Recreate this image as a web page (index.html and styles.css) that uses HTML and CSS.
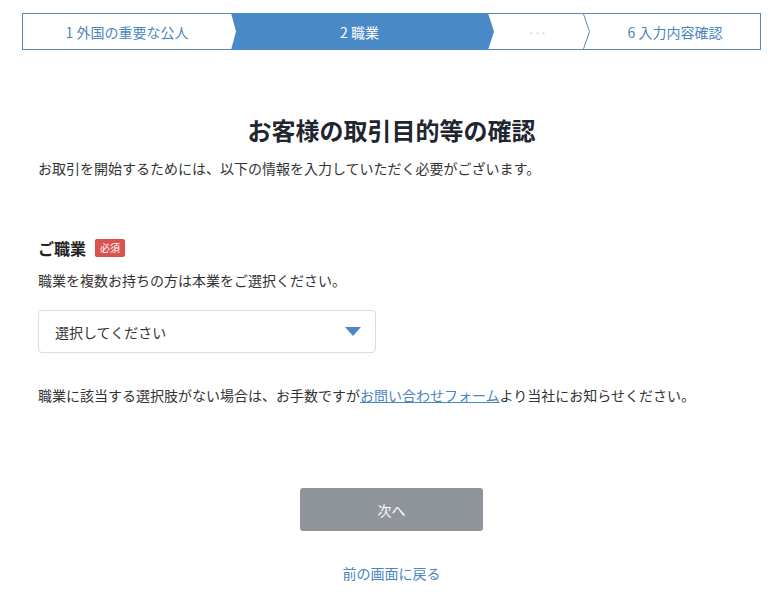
FILE: index.html
```html
<!DOCTYPE html>
<html lang="ja">
<head>
    <meta charset="UTF-8">
    <meta name="viewport" content="width=device-width, initial-scale=1.0">
    <title>お客様の取引目的等の確認</title>
    <link rel="stylesheet" href="styles.css">
</head>
<body>

<div class="page">
    <!-- Progress Steps -->
    <div class="steps">
        <div class="step step-done">1 外国の重要な公人</div>
        <div class="step step-current">2 職業</div>
        <div class="step step-more">···</div>
        <svg class="step-sep" width="7" height="35" viewBox="0 0 7 35">
            <polyline points="0.5,0 6.5,17.5 0.5,35" fill="none" stroke="#5a88b8" stroke-width="1"/>
        </svg>
        <div class="step step-last">6 入力内容確認</div>
    </div>

    <div class="content">
        <h1 class="title">お客様の取引目的等の確認</h1>
        <p class="lead">お取引を開始するためには、以下の情報を入力していただく必要がございます。</p>

        <!-- Occupation -->
        <div class="field">
            <div class="field-label">ご職業 <span class="badge">必須</span></div>
            <p class="field-help">職業を複数お持ちの方は本業をご選択ください。</p>
            <div class="select">
                <span>選択してください</span>
                <svg width="16" height="9" viewBox="0 0 16 9">
                    <polygon points="0,0 16,0 8,9" fill="#4a89c8"/>
                </svg>
            </div>
            <p class="field-note">職業に該当する選択肢がない場合は、お手数ですが<a href="#" class="inline-link">お問い合わせフォーム</a>より当社にお知らせください。</p>
        </div>

        <div class="actions">
            <button type="button" class="btn-next">次へ</button>
            <a href="#" class="back-link">前の画面に戻る</a>
        </div>
    </div>
</div>

</body>
</html>
```

FILE: styles.css
```css
/* General Page Styling */
body {
    margin: 0;
    background: #fff;
    font-family: "Noto Sans CJK JP", "Noto Sans", sans-serif;
    color: #333;
}

.page {
    width: 739px;
    margin: 13px 0 0 22px;
}

/* Progress Steps */
.steps {
    display: flex;
    height: 35px;
    border: 1px solid #5a88b8;
    background: #fff;
}

.step {
    display: flex;
    align-items: center;
    justify-content: center;
    font-size: 14px;
    color: #4a86c0;
}

.step-done {
    width: 208px;
}

.step-current {
    width: 263px;
    margin: -1px 0;
    padding-right: 6px;
    box-sizing: border-box;
    background: #4a89c8;
    color: #fff;
    clip-path: polygon(0 0, calc(100% - 6px) 0, 100% 50%, calc(100% - 6px) 100%, 0 100%, 5px 50%);
}

.step-more {
    width: 89px;
    padding-right: 2px;
    box-sizing: border-box;
    color: #a9c0d8;
    font-size: 11px;
}

.step-sep {
    flex: none;
    display: block;
}

.step-last {
    flex: 1;
}

/* Content */
.content {
    padding: 0 16px;
}

.title {
    margin: 64px 0 12px;
    font-size: 24px;
    line-height: 32px;
    font-weight: bold;
    text-align: center;
    color: #1f2630;
}

.lead {
    margin: 0;
    font-size: 14px;
    line-height: 20px;
}

/* Field */
.field {
    margin-top: 59px;
}

.field-label {
    display: flex;
    align-items: center;
    font-size: 16px;
    line-height: 22px;
    font-weight: bold;
    color: #222;
}

.badge {
    margin-left: 9px;
    padding: 0 5px;
    background: #d9534f;
    color: #fff;
    font-size: 10px;
    line-height: 18px;
    font-weight: normal;
    border-radius: 2px;
}

.field-help {
    margin: 11px 0 20px;
    font-size: 14px;
    line-height: 20px;
}

.select {
    display: flex;
    align-items: center;
    justify-content: space-between;
    width: 338px;
    height: 43px;
    padding: 0 14px 0 16px;
    box-sizing: border-box;
    border: 1px solid #dcdcdc;
    border-radius: 4px;
    font-size: 14px;
    color: #333;
}

.select svg {
    display: block;
}

.field-note {
    margin: 32px 0 0;
    font-size: 14px;
    line-height: 20px;
}

.inline-link {
    color: #4a86c0;
    text-decoration: underline;
}

/* Actions */
.actions {
    display: flex;
    flex-direction: column;
    align-items: center;
    margin-top: 83px;
}

.btn-next {
    width: 183px;
    height: 43px;
    border: none;
    border-radius: 3px;
    background: #8f959b;
    color: #fff;
    font-family: inherit;
    font-size: 14px;
    cursor: pointer;
}

.back-link {
    margin-top: 32px;
    font-size: 14px;
    line-height: 20px;
    color: #4a86c0;
    text-decoration: none;
}
```
